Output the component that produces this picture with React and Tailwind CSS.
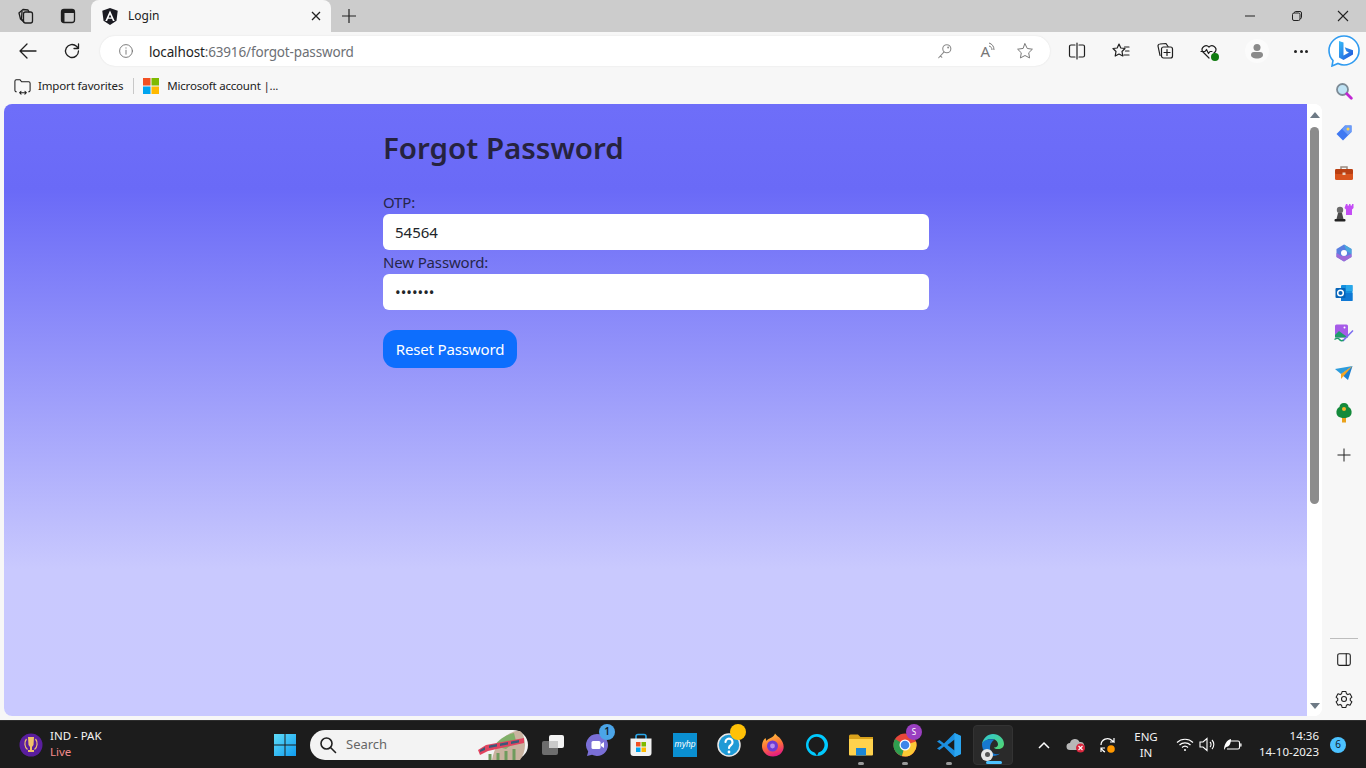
import { useId } from "react";

const Stroke = ({ size = 20, w = 1.3, color = "#1f1f1f", children, className = "" }) => (
  <svg width={size} height={size} viewBox="0 0 20 20" fill="none" stroke={color} strokeWidth={w} strokeLinecap="round" strokeLinejoin="round" className={className}>
    {children}
  </svg>
);

// browser chrome icons
const TabsIcon = () => (
  <Stroke size={20}>
    <path d="M3.5 6.5 7 3.5l5 .5 1 2" />
    <rect x="7.5" y="6" width="9" height="11" rx="2" />
    <path d="M7.5 15.5 4.5 13 3 7" />
    <path d="M6 5.5 5.5 13l2 2.5" />
  </Stroke>
);
const VerticalTabsIcon = () => (
  <svg width="20" height="20" viewBox="0 0 20 20">
    <rect x="3.5" y="3.5" width="13" height="13" rx="2.5" fill="none" stroke="#1f1f1f" strokeWidth="1.3" />
    <path d="M4 4h12v3H4zM4 7h2.5v9H4z" fill="#1f1f1f" />
  </svg>
);
const AngularLogo = () => (
  <svg width="16" height="17" viewBox="0 0 16 17">
    <path d="M8 0 .3 2.8l1.2 10L8 17l6.5-4.2 1.2-10z" fill="#1b1b22" />
    <path d="M8 2.6 3.3 13h1.8l.9-2.3h4l.9 2.3h1.8zm0 3.8 1.4 3H6.6z" fill="#fff" />
  </svg>
);
const WinLogo = ({ size = 16 }) => (
  <svg width={size} height={size} viewBox="0 0 16 16">
    <rect width="7.5" height="7.5" fill="#f25022" />
    <rect x="8.5" width="7.5" height="7.5" fill="#7fba00" />
    <rect y="8.5" width="7.5" height="7.5" fill="#00a4ef" />
    <rect x="8.5" y="8.5" width="7.5" height="7.5" fill="#ffb900" />
  </svg>
);
const BingIcon = () => (
  <svg width="32" height="32" viewBox="0 0 32 32">
    <defs>
      <linearGradient id="bing-b" x1="0" y1="0" x2="1" y2="1">
        <stop offset="0" stopColor="#37bdf8" />
        <stop offset="1" stopColor="#1f4fd8" />
      </linearGradient>
    </defs>
    <path d="M16 1C8 1 1 7.5 1 15.5c0 4 1.6 7.5 4 10L4 31l6-2.5c1.9.9 4 1.5 6 1.5 8 0 15-6.5 15-14.5S24 1 16 1z" fill="#fff" stroke="#2f9bf0" strokeWidth="1.6" />
    <path d="M11 6l4.500 1.500v13l5.500-3-2.600-1.300-1.700-4 8.300 3v4.300L15.500 25 11 22.500z" fill="url(#bing-b)" />
  </svg>
);

// right sidebar icons
const SideSearch = () => (
  <svg width="18" height="18" viewBox="0 0 18 18">
    <circle cx="7.5" cy="7.5" r="5.5" fill="#bfe3f5" stroke="#7d8b96" strokeWidth="1.8" />
    <path d="M11.8 11.8l4.500 4.500" stroke="#c026d3" strokeWidth="2.8" strokeLinecap="round" />
  </svg>
);
const SideTag = () => (
  <svg width="18" height="18" viewBox="0 0 18 18">
    <path d="M10 1.500h6.500V8L8 16.500 1.500 10z" fill="#3f78f2" />
    <path d="M10 1.500h6.500V8L13 11 7 5z" fill="#6b9cf8" />
    <circle cx="13" cy="5" r="1.5" fill="#fcd34d" />
  </svg>
);
const SideToolbox = () => (
  <svg width="18" height="16" viewBox="0 0 18 16">
    <path d="M6 4V2h6v2" fill="none" stroke="#9a8a80" strokeWidth="1.5" />
    <rect y="4" width="18" height="11" rx="1.5" fill="#d9541e" />
    <rect y="4" width="18" height="5" rx="1.5" fill="#b93f12" />
    <rect x="7.5" y="7.5" width="3" height="2.5" fill="#e8d4c4" />
  </svg>
);
const SideChess = () => (
  <svg width="20" height="18" viewBox="0 0 20 18">
    <path d="M12 0h1.500v1.500H15V0h1.500v1.500H18V0h1.500v4L18 5.500V11h-6V5.500L10.500 4z" fill="#c44df5" />
    <circle cx="6" cy="6" r="3.200" fill="#6b6b6b" />
    <path d="M4 9h4l1.500 6h-7z" fill="#4a4a4a" />
    <rect x="0.500" y="15" width="11" height="2.500" rx="1" fill="#222" />
  </svg>
);
const SideCopilot = () => (
  <svg width="18" height="18" viewBox="0 0 18 18">
    <path d="M9 .5 16.500 5v8L9 17.500 1.500 13V5z" fill="#5a7fe0" />
    <path d="M9 .5 16.500 5v5l-5-3z" fill="#4aa8dd" />
    <path d="M1.500 9 6.500 12l5 0 5-2v3L9 17.500 1.500 13z" fill="#a06ad8" />
    <circle cx="9" cy="9" r="3" fill="#fff" />
  </svg>
);
const SideOutlook = () => (
  <svg width="18" height="18" viewBox="0 0 18 18">
    <rect x="6" y="1" width="11.500" height="16" rx="1" fill="#1490df" />
    <rect x="11" y="1" width="6.500" height="6" fill="#28a8ea" />
    <path d="M6 9l11.500 0v8H6z" fill="#0f78d4" />
    <rect x=".5" y="4" width="10" height="10" rx="1" fill="#0664b8" />
    <circle cx="5.500" cy="9" r="2.800" fill="none" stroke="#fff" strokeWidth="1.5" />
  </svg>
);
const SideImage = () => (
  <svg width="20" height="19" viewBox="0 0 20 19">
    <rect x="1" y="0.500" width="13" height="13" rx="1.5" fill="#a65be8" />
    <path d="M1 11l4-4 4 3 5 3.500H1z" fill="#1f9d6a" />
    <path d="M8 16.500 18.500 6l1 1L9.500 17.500z" fill="#7b6cf0" />
    <path d="M0.500 15.500c2-1.500 4-1.500 5 0 1 1.500 3 1.500 4 .5" fill="none" stroke="#1f9d6a" strokeWidth="1.4" />
    <circle cx="10.500" cy="3.500" r="1" fill="#fff" />
  </svg>
);
const SideSend = () => (
  <svg width="18" height="15" viewBox="0 0 18 15">
    <path d="M0 3 17.500 0 6 8z" fill="#2d9cdb" />
    <path d="M17.500 0 13 14 6 8z" fill="#1b7fd1" />
    <path d="M17.500 0 6 8v5z" fill="#f5a623" />
  </svg>
);
const SideTree = () => (
  <svg width="16" height="20" viewBox="0 0 16 20">
    <rect x="6" y="14" width="4" height="5.500" fill="#eaa21b" />
    <path d="M8 0c3 0 4.500 2 4.500 4C15 5 16 8 15.500 10.500 15 13.500 12 15 8 15s-7-1.500-7.500-4.500C0 8 1 5 3.500 4 3.500 2 5 0 8 0z" fill="#148a3b" />
    <circle cx="8" cy="6" r="2" fill="#f4b62a" />
  </svg>
);

// taskbar icons
const WorldCup = () => (
  <svg width="24" height="24" viewBox="0 0 24 24">
    <circle cx="12" cy="12" r="11.5" fill="#5a1e9e" />
    <path d="M9 4h6l-.5 8-1.500 2v3h2v2H9v-2h2v-3l-1.500-2z" fill="#f0c36a" />
    <path d="M7.500 6c-2.500 3-2 8 1 10.500M16.500 6c2.500 3 2 8-1 10.500" fill="none" stroke="#f0c36a" strokeWidth="1.2" />
  </svg>
);
const Win11 = () => (
  <svg width="24" height="24" viewBox="0 0 24 24">
    <defs>
      <linearGradient id="w11" x1="0" y1="0" x2="1" y2="1">
        <stop offset="0" stopColor="#5fdcf8" />
        <stop offset="1" stopColor="#0f9bf0" />
      </linearGradient>
    </defs>
    <path d="M1 1h10.500v10.500H1zM12.500 1H23v10.500H12.500zM1 12.500h10.500V23H1zM12.500 12.500H23V23H12.500z" fill="url(#w11)" />
  </svg>
);
const TrainArt = () => (
  <svg width="48" height="30" viewBox="0 0 48 30">
    <path d="M14 30C16 16 26 4 38 1h4c3 2 5 8 5 14s-2 11-5 15z" fill="#c9b3a0" />
    <path d="M16 16C22 8 28 5 36 3l2 8-10 8z" fill="#7fb069" />
    <path d="M0 20 8 15l38-7v5L10 21l-8 4z" fill="#e0445f" />
    <path d="M2 20l5-3v3l-5 2zM11 15.500l8-1.500v2.500l-8 1.500zM22 13.500l8-1.500v2.500l-8 1.500zM33 11.500l8-1.500v2.500l-8 1.500z" fill="#3c5a78" />
    <path d="M12 24v6M20 23v7M28 21v9M36 19v11" stroke="#6f9b5d" strokeWidth="3" />
  </svg>
);
const TaskView = () => (
  <svg width="24" height="24" viewBox="0 0 24 24">
    <rect x="1" y="8" width="16" height="14" rx="2" fill="#6d6d6d" />
    <rect x="8" y="2" width="15" height="13" rx="2" fill="#f2f2f2" />
    <rect x="8" y="8" width="9" height="7" fill="#c9c9c9" />
  </svg>
);
const TeamsChat = () => (
  <div className="relative w-6 h-6">
    <svg width="24" height="24" viewBox="0 0 24 24">
      <path d="M12 1a11 11 0 1 1-5 20.800L2 23l1.200-4.500A11 11 0 0 1 12 1z" fill="#7a6fd6" />
      <rect x="6.500" y="8" width="9" height="8" rx="1.5" fill="#fff" />
      <path d="M16 11l3-2v6l-3-2z" fill="#fff" />
    </svg>
    <div className="absolute -top-[9px] -right-[6px] w-[16px] h-[16px] rounded-full bg-[#4ba5e8] text-[#10202c] text-[10px] font-semibold flex items-center justify-center">1</div>
  </div>
);
const StoreIcon = () => (
  <svg width="24" height="24" viewBox="0 0 24 24">
    <path d="M7 6V3.500A2 2 0 0 1 9 1.500h6a2 2 0 0 1 2 2V6" fill="none" stroke="#2aa6e8" strokeWidth="1.6" />
    <path d="M1.500 5.500h21V20a3 3 0 0 1-3 3h-15a3 3 0 0 1-3-3z" fill="#f1f1f1" />
    <rect x="7" y="9" width="4.500" height="4.500" fill="#f25022" />
    <rect x="12.500" y="9" width="4.500" height="4.500" fill="#7fba00" />
    <rect x="7" y="14.500" width="4.500" height="4.500" fill="#00a4ef" />
    <rect x="12.500" y="14.500" width="4.500" height="4.500" fill="#ffb900" />
  </svg>
);
const MyHp = () => (
  <div className="w-6 h-6 bg-[#0a8fd1] flex items-center justify-center text-white text-[8.5px] italic leading-none" style={{ fontFamily: '"Liberation Sans", sans-serif' }}>
    myhp
  </div>
);
const HelpIcon = () => (
  <div className="relative w-6 h-6">
    <svg width="24" height="24" viewBox="0 0 24 24">
      <circle cx="12" cy="12" r="11" fill="#1e9ad6" stroke="#e8e8e8" strokeWidth="1.5" />
      <path d="M8.500 9a3.500 3.500 0 1 1 5.500 3c-1.300.9-2 1.500-2 3" fill="none" stroke="#fff" strokeWidth="2.2" strokeLinecap="round" />
      <circle cx="12" cy="19" r="1.4" fill="#fff" />
    </svg>
    <div className="absolute -top-[9px] -right-[5px] w-[16px] h-[16px] rounded-full bg-[#ffc107]" />
  </div>
);
const Firefox = () => (
  <svg width="24" height="24" viewBox="0 0 24 24">
    <defs>
      <linearGradient id="ff" x1="0.3" y1="0" x2="0.6" y2="1">
        <stop offset="0" stopColor="#ffc83a" />
        <stop offset="0.5" stopColor="#ff7139" />
        <stop offset="1" stopColor="#e31587" />
      </linearGradient>
    </defs>
    <path d="M14 .5c1 2 4 3 6 6 2.500 3.500 3 7 2.500 9-1 5-5.500 8-10.500 8C5.500 23.500 1 18.500 1 13c0-3 1-5 2-6.500L4.500 5l1 3c1-2 3-2.500 4-3 2-1 4-2.500 4.500-4.500z" fill="url(#ff)" />
    <circle cx="11.5" cy="13" r="5.5" fill="#6e3bd4" />
    <circle cx="11.5" cy="13" r="2.4" fill="#b68cf0" />
  </svg>
);
const Alexa = () => (
  <svg width="24" height="24" viewBox="0 0 24 24">
    <path d="M12 1a11 11 0 1 0 0 22c-.5-1-1-2-2.500-3.500a8 8 0 1 1 4 0L12 23a11 11 0 0 0 0-22z" fill="#00caff" />
  </svg>
);
const Folder = () => (
  <svg width="24" height="22" viewBox="0 0 24 22">
    <path d="M0 2a1.500 1.500 0 0 1 1.500-1.500H9L11.500 3H24v4H0z" fill="#d9a21b" />
    <path d="M0 5h24v15.500a1 1 0 0 1-1 1H1a1 1 0 0 1-1-1z" fill="#ffd24d" />
    <rect x="7" y="14" width="10" height="7.5" fill="#1b87d6" />
  </svg>
);
const Chrome = () => (
  <div className="relative w-6 h-6">
    <svg width="24" height="24" viewBox="0 0 24 24">
      <circle cx="12" cy="12" r="11.5" fill="#e8463a" />
      <path d="M12 12 2 6A11.500 11.500 0 0 0 9 23z" fill="#2f9e4f" />
      <path d="M12 12 9 23a11.500 11.500 0 0 0 14-14.500z" fill="#fcc934" />
      <circle cx="12" cy="12" r="5.5" fill="#fff" />
      <circle cx="12" cy="12" r="4.3" fill="#3f86ea" />
    </svg>
    <div className="absolute -top-[9px] -right-[5px] w-[16px] h-[16px] rounded-full bg-[#9a3fc0] text-white text-[8px] flex items-center justify-center">S</div>
  </div>
);
const VsCode = () => (
  <svg width="24" height="24" viewBox="0 0 24 24">
    <path d="M17.500 0 24 3v18l-6.500 3L7 13.500l-4.500 3.500L0 15.500 5 12 0 8.500 2.500 7 7 10.500z" fill="#1b8fe0" />
    <path d="M17.500 6.500 10.500 12l7 5.500z" fill="#1c1c1c" />
    <path d="M17.500 0 24 3v18l-6.500 3z" fill="#2aa5f0" />
  </svg>
);
const EdgeProfile = () => (
  <div className="relative w-6 h-6">
    <svg width="24" height="24" viewBox="0 0 24 24">
      <defs>
        <linearGradient id="edge" x1="0" y1="0" x2="1" y2="1">
          <stop offset="0" stopColor="#30c7d8" />
          <stop offset="1" stopColor="#52d66b" />
        </linearGradient>
      </defs>
      <path d="M1 11C2 5 7 1 12 1c6 0 11 4.500 11 10 0 3-2.500 5-6 5-2 0-3.500-.5-4-1.500 3 0 4-1.500 4-3C17 8 14 6 10.500 6 6.500 6 3 8 1 11z" fill="url(#edge)" />
      <path d="M1 11c0 6 4 12 11 12 3 0 5.500-1 7-2.500-5 2-10-1-10-6 0-3 1.500-6 4.500-8C8 5.500 2 7 1 11z" fill="#1678cf" />
    </svg>
    <div className="absolute -bottom-[4px] left-0 w-[12px] h-[12px] rounded-full bg-[#e6e6e6] flex items-center justify-center">
      <div className="w-[5px] h-[5px] rounded-full bg-[#555]" />
    </div>
  </div>
);

const sideIcons = [
  { key: "tag", el: <SideTag /> },
  { key: "toolbox", el: <SideToolbox /> },
  { key: "chess", el: <SideChess /> },
  { key: "copilot", el: <SideCopilot /> },
  { key: "outlook", el: <SideOutlook /> },
  { key: "image", el: <SideImage /> },
  { key: "send", el: <SideSend /> },
  { key: "tree", el: <SideTree /> },
];

const taskIcons = [
  { key: "view", el: <TaskView /> },
  { key: "chat", el: <TeamsChat /> },
  { key: "store", el: <StoreIcon /> },
  { key: "hp", el: <MyHp /> },
  { key: "help", el: <HelpIcon /> },
  { key: "ff", el: <Firefox /> },
  { key: "alexa", el: <Alexa /> },
  { key: "folder", el: <Folder />, dot: true },
  { key: "chrome", el: <Chrome />, dot: true },
  { key: "code", el: <VsCode />, dot: true },
];

const App = () => {
  const otpId = useId();
  const passId = useId();

  return (
    <div className="w-[1366px] h-[768px] overflow-hidden flex flex-col bg-[#f7f7f7] text-[#212529]" style={{ fontFamily: '"Noto Sans", "Open Sans", sans-serif' }}>
      {/* tab strip */}
      <div className="h-8 bg-[#cccccc] flex items-end shrink-0">
        <div className="w-[91px] h-8 flex items-center pl-[16px] gap-[22px]">
          <TabsIcon />
          <VerticalTabsIcon />
        </div>
        <div className="w-[240px] h-8 bg-[#f7f7f7] rounded-t-lg flex items-center pl-[11px] pr-[9px]">
          <AngularLogo />
          <span className="ml-[10px] text-[12px] text-[#222] flex-1">Login</span>
          <svg width="12" height="12" viewBox="0 0 12 12" stroke="#222" strokeWidth="1.3"><path d="M2 2l8 8M10 2l-8 8" /></svg>
        </div>
        <div className="w-[36px] h-8 flex items-center justify-center">
          <svg width="16" height="16" viewBox="0 0 16 16" stroke="#222" strokeWidth="1.2"><path d="M8 1v14M1 8h14" /></svg>
        </div>
        <div className="flex-1" />
        <div className="h-8 flex items-center">
          <div className="w-[47px] flex justify-center">
            <svg width="12" height="12" viewBox="0 0 12 12" stroke="#222"><path d="M1 6h10" /></svg>
          </div>
          <div className="w-[47px] flex justify-center">
            <svg width="12" height="12" viewBox="0 0 12 12" fill="none" stroke="#222"><rect x="1.5" y="3" width="7.5" height="7.5" rx="1.5" /><path d="M3.500 3V2.500a1 1 0 0 1 1-1H9a1.500 1.500 0 0 1 1.500 1.500v4.500a1 1 0 0 1-1 1H9" /></svg>
          </div>
          <div className="w-[46px] flex justify-center">
            <svg width="12" height="12" viewBox="0 0 12 12" stroke="#222" strokeWidth="1.1"><path d="M1 1l10 10M11 1 1 11" /></svg>
          </div>
        </div>
      </div>

      {/* toolbar */}
      <div className="h-[38px] shrink-0 flex items-center pl-[18px]">
        <Stroke size={20}><path d="M18 10H2M9 3 2 10l7 7" /></Stroke>
        <div className="ml-[24px]">
          <Stroke size={20}><path d="M16.500 10a6.500 6.500 0 1 1-2-4.700L16.500 7.500M16.500 3v4.500H12" /></Stroke>
        </div>
        <div className="ml-[18px] w-[950px] h-[30px] rounded-full bg-white shadow-[0_0_2px_rgba(0,0,0,0.1)] flex items-center pl-[18px] pr-[16px]">
          <Stroke size={16} w={1.1} color="#6b6b6b">
            <circle cx="10" cy="10" r="8" />
            <path d="M10 9v5M10 6v.5" />
          </Stroke>
          <span className="ml-[15px] text-[13.5px] tracking-[-0.15px] text-[#1f1f1f] relative top-[1px]">localhost<span className="text-[#6d7075]">:63916/forgot-password</span></span>
          <div className="flex-1" />
          <Stroke size={18} w={1.2} color="#8a8a8a"><circle cx="12" cy="7.5" r="4.5" /><path d="M9 11 3 17.500M5 15.500l1.500 1.500" /><circle cx="13.5" cy="6" r=".5" /></Stroke>
          <span className="ml-[26px] text-[15px] text-[#777] leading-none relative">
            A
            <svg className="absolute -top-[2px] -right-[6px]" width="8" height="10" viewBox="0 0 8 10" fill="none" stroke="#777"><path d="M1 1c3 1 5 3 5 7M1 4c2 .5 3 2 3 4" /></svg>
          </span>
          <div className="ml-[26px]">
            <Stroke size={18} w={1.1} color="#777"><path d="M10 2l2.500 5.200 5.700.8-4.100 4 1 5.700-5.100-2.700-5.100 2.700 1-5.700-4.100-4 5.700-.8z" /></Stroke>
          </div>
        </div>
        <div className="ml-[17px]">
          <Stroke size={20} w={1.2}><path d="M10 2v16M8 4H4a1.500 1.500 0 0 0-1.500 1.500v9A1.500 1.500 0 0 0 4 16h4M12 4h4a1.500 1.500 0 0 1 1.500 1.500v9A1.500 1.500 0 0 1 16 16h-4" /></Stroke>
        </div>
        <div className="ml-[24px]">
          <Stroke size={20} w={1.2}><path d="M8 3l1.800 4 4.200.5-3 3 .8 4.500L8 13l-3.800 2L5 10.500l-3-3L6.200 7zM13.500 6H18M14.500 10H18M13 14h5" /></Stroke>
        </div>
        <div className="ml-[24px]">
          <Stroke size={20} w={1.2}><path d="M5 14.500 3 5a2 2 0 0 1 2-2l6-.5 2 3" /><rect x="6.5" y="6" width="11" height="11" rx="2" /><path d="M12 8.500v6M9 11.500h6" /></Stroke>
        </div>
        <div className="ml-[24px] relative">
          <Stroke size={20} w={1.2}><path d="M10 17 3.500 10.500A4 4 0 0 1 10 6a4 4 0 0 1 6.500 4.500L15 12" /><path d="M2 10.500h4l1.500-2 2 4 1.500-2h2" /></Stroke>
          <div className="absolute bottom-0 right-0 w-[8px] h-[8px] rounded-full bg-[#107c10]" />
        </div>
        <div className="ml-[26px] w-[24px] h-[24px] rounded-full bg-[#fbfbfb] flex items-center justify-center">
          <svg width="16" height="16" viewBox="0 0 16 16" fill="#8a8a8a"><circle cx="8" cy="4.5" r="3.5" /><path d="M2 12a3 3 0 0 1 3-3h6a3 3 0 0 1 3 3c0 2-2.500 3.500-6 3.500S2 14 2 12z" /></svg>
        </div>
        <div className="ml-[25px] w-[14px] flex justify-between">
          <div className="w-[3px] h-[3px] rounded-full bg-[#222]" />
          <div className="w-[3px] h-[3px] rounded-full bg-[#222]" />
          <div className="w-[3px] h-[3px] rounded-full bg-[#222]" />
        </div>
        <div className="ml-[20px]"><BingIcon /></div>
      </div>

      <div className="flex-1 flex min-h-0">
        <div className="flex-1 flex flex-col min-w-0">
          {/* favorites bar */}
          <div className="h-[34px] shrink-0 flex items-center pl-[13px] pb-[2px] text-[11.5px] text-[#222]">
            <Stroke size={19} w={1.1}><path d="M2 14V4.500A1.500 1.500 0 0 1 3.500 3h4L9 5h7.500A1.500 1.500 0 0 1 18 6.500V14a1.500 1.500 0 0 1-1.500 1.500M2 14a1.500 1.500 0 0 0 1.500 1.500M7 16.500h7M7 16.500l1.500-1.500M7 16.500 8.500 18M14 16.500 12.500 15M14 16.500 12.500 18" /></Stroke>
            <span className="ml-[6px] tracking-[-0.15px]">Import favorites</span>
            <div className="ml-[10px] w-px h-4 bg-[#c8c8c8]" />
            <div className="ml-[9px]"><WinLogo /></div>
            <span className="ml-[8px] tracking-[-0.2px]">Microsoft account |...</span>
          </div>

          {/* page */}
          <div className="h-[612px] shrink-0 ml-1 rounded-l-lg rounded-r-lg overflow-hidden flex bg-white">
            <div className="flex-1 bg-[linear-gradient(180deg,#6e6ef9_0%,#6a6af7_14%,#c9c9fe_76%,#c9c9ff_100%)] pl-[379px] pt-[25px]">
              <div className="w-[546px]">
                <h2 className="text-[29.5px] font-semibold leading-[40px] -mt-[1px] mb-[22px] text-[#26233f]">Forgot Password</h2>
                <label htmlFor={otpId} className="block text-[15px] tracking-[-0.15px] leading-[24px] text-[#26264a]">OTP:</label>
                <input id={otpId} type="text" readOnly value="54564" className="block w-full h-[36px] rounded-md bg-white px-3 text-[15px] text-[#212529] outline-none" />
                <label htmlFor={passId} className="block text-[15px] tracking-[-0.15px] leading-[24px] text-[#26264a]">New Password:</label>
                <input id={passId} type="password" readOnly value="1234567" className="block w-full h-[36px] rounded-md bg-white px-3 text-[15px] text-[#212529] outline-none" />
                <button className="mt-5 w-[134px] h-[38px] rounded-[13px] bg-[#0d6efd] text-white text-[15px] tracking-[-0.15px]">Reset Password</button>
              </div>
            </div>
            {/* scrollbar */}
            <div className="w-[15px] shrink-0 bg-white flex flex-col items-center pt-[8px]">
              <div className="w-0 h-0 border-x-[5px] border-x-transparent border-b-[6px] border-b-[#6e7a85]" />
              <div className="mt-[9px] w-[9px] h-[377px] rounded-full bg-[#8c8c8c]" />
              <div className="flex-1" />
              <div className="mb-[7px] w-0 h-0 border-x-[5px] border-x-transparent border-t-[6px] border-t-[#6e7a85]" />
            </div>
          </div>
        </div>

        {/* edge sidebar */}
        <div className="w-[44px] shrink-0 flex flex-col items-center pt-[12px]">
          <div className="h-[18px] flex items-center"><SideSearch /></div>
          <div className="mt-[13px] flex flex-col items-center">
            {sideIcons.map((item) => (
              <div key={item.key} className="h-10 flex items-center justify-center">{item.el}</div>
            ))}
          </div>
          <div className="mt-[12px] h-[20px] flex items-center">
            <svg width="14" height="14" viewBox="0 0 14 14" stroke="#222"><path d="M7 .5v13M.5 7h13" /></svg>
          </div>
          <div className="flex-1" />
          <div className="w-[28px] h-px bg-[#bdbdbd]" />
          <div className="mt-[12px]">
            <Stroke size={18} w={1.2}><rect x="3" y="3" width="14" height="13" rx="2" /><path d="M12.500 3v13" /></Stroke>
          </div>
          <div className="mt-[20px] mb-[11px]">
            <svg width="20" height="20" viewBox="0 0 24 24" fill="none" stroke="#1f1f1f" strokeWidth="1.3" strokeLinejoin="round">
              <path d="M9.700 3h4.600l.6 2.700 1.700 1 2.600-.9 2.300 4-2 1.800v2l2 1.800-2.300 4-2.600-.9-1.700 1-.6 2.700H9.700l-.6-2.700-1.700-1-2.600.9-2.300-4 2-1.800v-2l-2-1.800 2.300-4 2.600.9 1.700-1z" />
              <circle cx="12" cy="12" r="3" />
            </svg>
          </div>
        </div>
      </div>

      {/* taskbar */}
      <div className="h-12 shrink-0 bg-[#1c1c1c] border-t border-[#2e2e2e] flex items-center text-white">
        <div className="ml-[19px] w-[24px]"><WorldCup /></div>
        <div className="ml-[7px] w-[223px] text-[11.5px] leading-[16px] -mt-[2px]">
          <div className="text-[#f3f3f3]">IND - PAK</div>
          <div className="text-[#f28b8b]">Live</div>
        </div>
        <Win11 />
        <div className="ml-[13px] w-[218px] h-[30px] rounded-full bg-[#f3f3f3] flex items-center pl-[9px] pr-[2px]">
          <svg width="18" height="18" viewBox="0 0 18 18" fill="none" stroke="#1f1f1f" strokeWidth="1.6" strokeLinecap="round"><circle cx="7.5" cy="7.5" r="5.5" /><path d="M11.500 11.500l5 5" /></svg>
          <span className="ml-[9px] text-[13px] text-[#666] flex-1">Search</span>
          <TrainArt />
        </div>
        <div className="ml-[3px] flex">
          {taskIcons.map((item) => (
            <div key={item.key} className="relative w-[44px] h-10 flex items-center justify-center">
              {item.el}
              {item.dot && <div className="absolute bottom-0 left-[19px] w-[6px] h-[3px] rounded-full bg-[#9a9a9a]" />}
            </div>
          ))}
          <div className="relative w-[40px] h-10 ml-[2px] rounded bg-[#2a2a2a] border border-[#333] flex items-center justify-center">
            <EdgeProfile />
            <div className="absolute bottom-0 left-[12px] w-[16px] h-[3px] rounded-full bg-[#4cc2ff]" />
          </div>
        </div>
        <div className="ml-[25px] w-3">
          <svg width="12" height="8" viewBox="0 0 12 8" fill="none" stroke="#fff" strokeWidth="1.5"><path d="M1 7l5-5 5 5" /></svg>
        </div>
        <div className="ml-[16px] relative w-5">
          <svg width="20" height="16" viewBox="0 0 20 16"><path d="M4 13a3.500 3.500 0 0 1 0-7 5 5 0 0 1 9.500-1A4 4 0 0 1 15 13z" fill="#b8b8b8" /><circle cx="14.5" cy="11" r="4.5" fill="#d8253c" /><path d="M12.500 9l4 4M16.500 9l-4 4" stroke="#fff" strokeWidth="1.1" /></svg>
        </div>
        <div className="ml-[12px] w-5">
          <svg width="20" height="20" viewBox="0 0 20 20" fill="none" stroke="#fff" strokeWidth="1.2"><path d="M3 10a6.500 6.500 0 0 1 11-4.500L16 7V3M16 7h-4M3 13l2 2.500a6 6 0 0 0 2 1.500M3 17v-4h4" /><circle cx="13" cy="14" r="3.8" fill="#ff9800" stroke="none" /></svg>
        </div>
        <div className="ml-[10px] w-[36px] text-center text-[11.5px] leading-[16px] text-[#f3f3f3]">
          <div>ENG</div>
          <div>IN</div>
        </div>
        <div className="ml-[12px] w-[20px]">
          <svg width="18" height="15" viewBox="0 0 18 15" fill="none" stroke="#fff" strokeWidth="1.2"><path d="M1 5.500a11.500 11.500 0 0 1 16 0M3.500 8a8 8 0 0 1 11 0M6 10.500a4.500 4.500 0 0 1 6 0" /><circle cx="9" cy="13" r="1" fill="#fff" stroke="none" /></svg>
        </div>
        <div className="ml-[3px] w-[18px]">
          <svg width="17" height="15" viewBox="0 0 17 15" fill="none" stroke="#fff" strokeWidth="1.1"><path d="M1 5h3l4-3.500v12L4 10H1zM11 5a3.500 3.500 0 0 1 0 5M13 3a6.500 6.500 0 0 1 0 9" /></svg>
        </div>
        <div className="ml-[5px] w-[20px]">
          <svg width="20" height="14" viewBox="0 0 20 14" fill="none" stroke="#fff" strokeWidth="1.1"><path d="M8 3h8a1.500 1.500 0 0 1 1.500 1.500v5A1.500 1.500 0 0 1 16 11H5M17.500 6h1.500v2h-1.500" /><path d="M2 12C2 6 5 2 9 1c0 5-2 8-5 8" fill="#fff" stroke="none" /></svg>
        </div>
        <div className="flex-1 text-right text-[11.5px] leading-[16px] text-[#f3f3f3] -mt-[2px]">
          <div>14:36</div>
          <div>14-10-2023</div>
        </div>
        <div className="ml-[11px] mr-[20px] w-4 h-4 rounded-full bg-[#4cc2ff] text-[#10202c] text-[10px] flex items-center justify-center">6</div>
      </div>
    </div>
  );
};

export default App;
